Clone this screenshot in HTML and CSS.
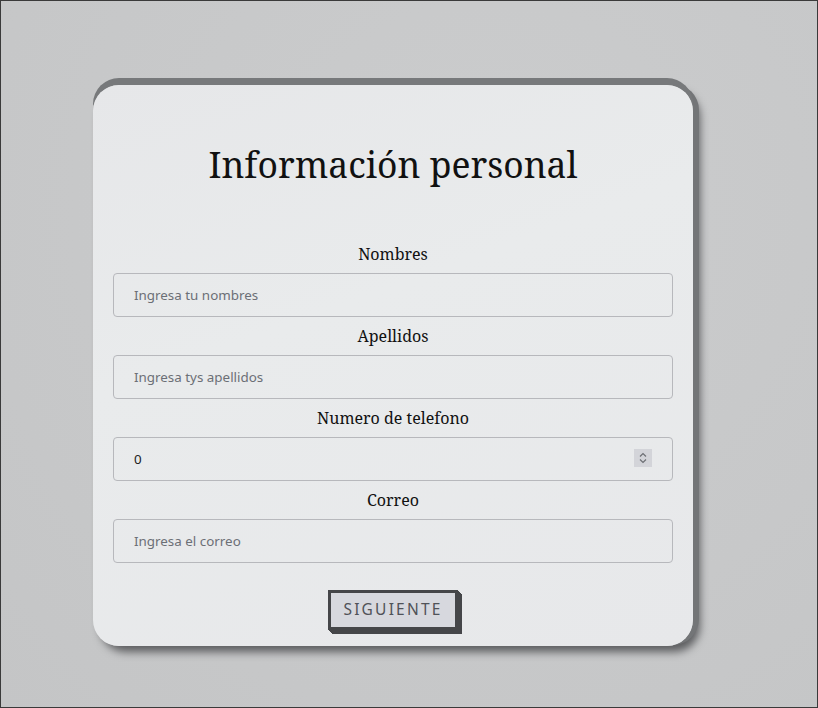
FILE: index.html
```html
<!DOCTYPE html>
<html lang="es">

<head>
  <meta charset="UTF-8">
  <meta name="viewport" content="width=device-width, initial-scale=1.0">
  <title>Información personal</title>
  <link rel="stylesheet" href="styles.css">
</head>

<body>
  <!-- tarjeta del formulario -->
  <div class="card">
    <h1 class="title">Información personal</h1>

    <form class="form">
      <label class="label" for="nombres">Nombres</label>
      <input class="field" id="nombres" type="text" placeholder="Ingresa tu nombres">

      <label class="label" for="apellidos">Apellidos</label>
      <input class="field" id="apellidos" type="text" placeholder="Ingresa tys apellidos">

      <label class="label" for="telefono">Numero de telefono</label>
      <div class="number-wrap">
        <input class="field" id="telefono" type="number" value="0">
        <!-- flechas del campo numerico -->
        <span class="spinner">
          <svg width="18" height="18" viewBox="0 0 18 18">
            <path d="M6 7.5 L9 4.5 L12 7.5" fill="none" stroke="#6d6f74" stroke-width="1.2"/>
            <path d="M6 10.5 L9 13.5 L12 10.5" fill="none" stroke="#6d6f74" stroke-width="1.2"/>
          </svg>
        </span>
      </div>

      <label class="label" for="correo">Correo</label>
      <input class="field" id="correo" type="email" placeholder="Ingresa el correo">

      <button class="next-btn" type="button">SIGUIENTE</button>
    </form>
  </div>
</body>

</html>
```

FILE: styles.css
```css
/* fondo general */
html {
  height: 100%;
}

body {
  margin: 0;
  min-height: 100%;
  box-sizing: border-box;
  border: 1px solid #3a3a3a;
  background: radial-gradient(ellipse at 60% 30%, #cbcccd 0%, #c7c8c9 60%, #c4c5c6 100%);
  padding: 84px 0 0 92px;
  font-family: "Noto Serif", "DejaVu Serif", serif;
}

/* tarjeta */
.card {
  width: 600px;
  box-sizing: border-box;
  padding: 0 20px 16px;
  border-radius: 26px;
  background: linear-gradient(160deg, #e6e7e9 0%, #e9ebec 40%, #e7e8ea 100%);
  box-shadow: 0 -7px 0 #77797b, 6px -1px 0 #737577, 7px 6px 9px #5d5e60;
}

.title {
  margin: 0;
  padding: 55px 0 55px;
  font-size: 35.5px;
  font-weight: 400;
  line-height: 48px;
  text-align: center;
  color: #111;
}

.form {
  display: flex;
  flex-direction: column;
  align-items: center;
}

.label {
  display: block;
  margin: 8px 0;
  font-size: 16px;
  line-height: 22px;
  color: #111;
}

.form .label:first-child {
  margin-top: 0;
}

/* campos */
.field {
  width: 100%;
  height: 44px;
  box-sizing: border-box;
  padding: 0 20px;
  border: 1px solid #b7b8bc;
  border-radius: 4px;
  background: transparent;
  font-family: "Noto Sans", "Open Sans", sans-serif;
  font-size: 13.4px;
  color: #222;
}

.field::placeholder {
  color: #6c6f76;
}

.number-wrap {
  position: relative;
  width: 100%;
}

.number-wrap .field {
  display: block;
  -moz-appearance: textfield;
}

.number-wrap .field::-webkit-inner-spin-button,
.number-wrap .field::-webkit-outer-spin-button {
  -webkit-appearance: none;
  margin: 0;
}

.spinner {
  position: absolute;
  top: 12px;
  right: 21px;
  width: 18px;
  height: 18px;
  background-color: #d3d4d9;
}

.spinner svg {
  display: block;
}

/* boton */
.next-btn {
  margin-top: 27px;
  padding: 5px 12px 7px;
  border: 3px solid #454649;
  background-color: #d7d8de;
  box-shadow: 1px 1px 0 #454649, 2px 2px 0 #454649, 3px 3px 0 #454649, 4px 4px 0 #454649;
  font-family: "Noto Sans", "Open Sans", sans-serif;
  font-size: 15.5px;
  letter-spacing: 2.2px;
  color: #505258;
  cursor: pointer;
}
```
